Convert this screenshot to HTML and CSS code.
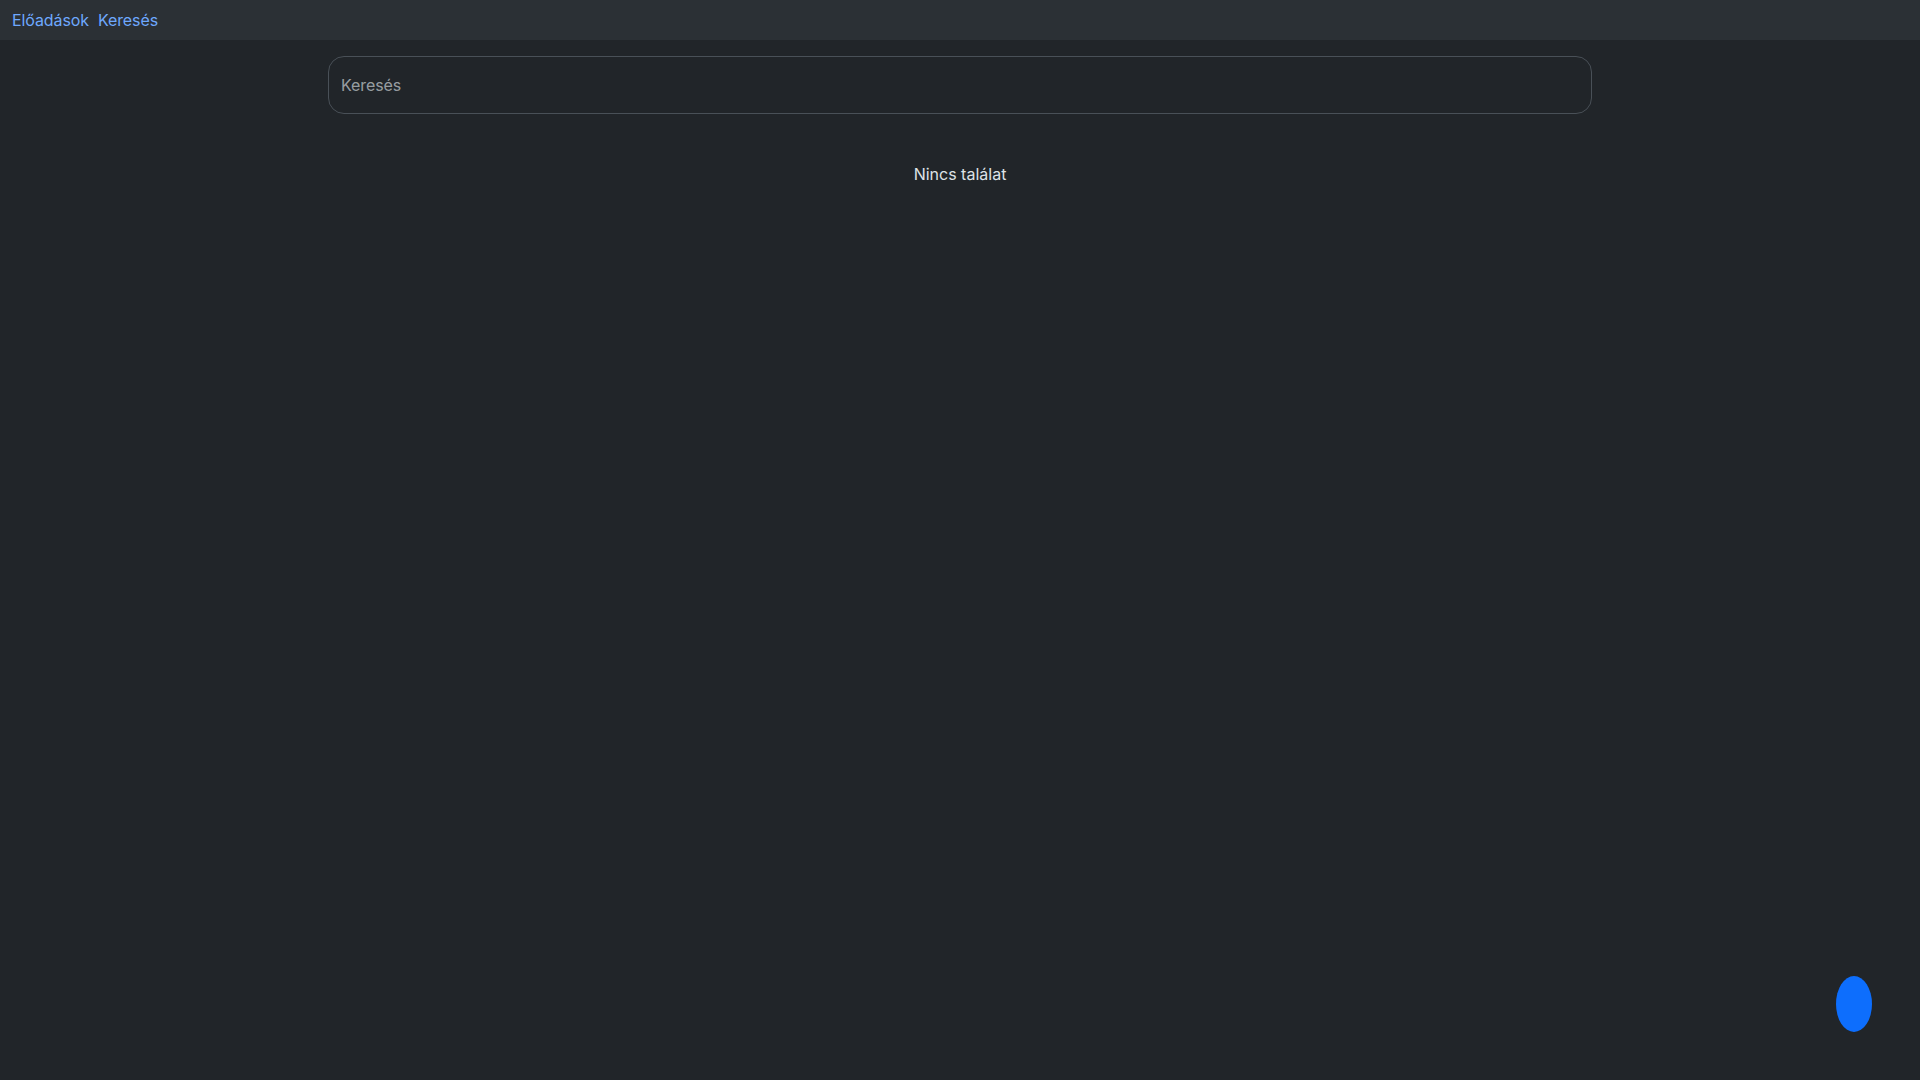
FILE: index.html
```html
<!DOCTYPE html>
<html lang="hu">
<head>
<meta charset="utf-8">
<title>Keresés</title>
<link rel="stylesheet" href="styles.css">
</head>
<body>
<nav class="topbar">
  <a class="nav-link" href="#">Előadások</a>
  <a class="nav-link" href="#">Keresés</a>
</nav>
<main class="content">
  <div class="search">
    <input class="search-input" type="text" placeholder="Keresés">
  </div>
  <p class="empty">Nincs találat</p>
</main>
<button class="fab" type="button" aria-label="Fel"></button>
</body>
</html>
```

FILE: styles.css
```css
* { box-sizing: border-box; }
html, body { height: 100%; }
body {
  margin: 0;
  background: #212529;
  color: #dee2e6;
  font-family: Inter, "Noto Sans", sans-serif;
  font-size: 16px;
  line-height: 1.5;
}
.topbar {
  height: 40px;
  background: #2b3035;
  display: flex;
  align-items: center;
  gap: 9px;
  padding: 0 12px;
}
.nav-link {
  color: #6ea8fe;
  text-decoration: none;
  font-size: 16px;
  letter-spacing: -0.1px;
}
.content {
  max-width: 1264px;
  margin: 0 auto;
  padding-top: 16px;
}
.search { width: 100%; }
.search-input {
  display: block;
  width: 100%;
  height: 58px;
  padding: 16px 12px;
  border: 1px solid #495057;
  border-radius: 16px;
  background: #212529;
  color: #dee2e6;
  font-family: inherit;
  font-size: 16px;
  line-height: 1.5;
  letter-spacing: -0.1px;
  outline: none;
}
.search-input::placeholder { color: rgba(222, 226, 230, 0.65); }
.empty {
  margin: 48px 0 0;
  text-align: center;
}
.fab {
  position: fixed;
  right: 48px;
  bottom: 48px;
  width: 36px;
  height: 56px;
  border: 0;
  border-radius: 50%;
  background: #0d6efd;
  padding: 0;
}
```
